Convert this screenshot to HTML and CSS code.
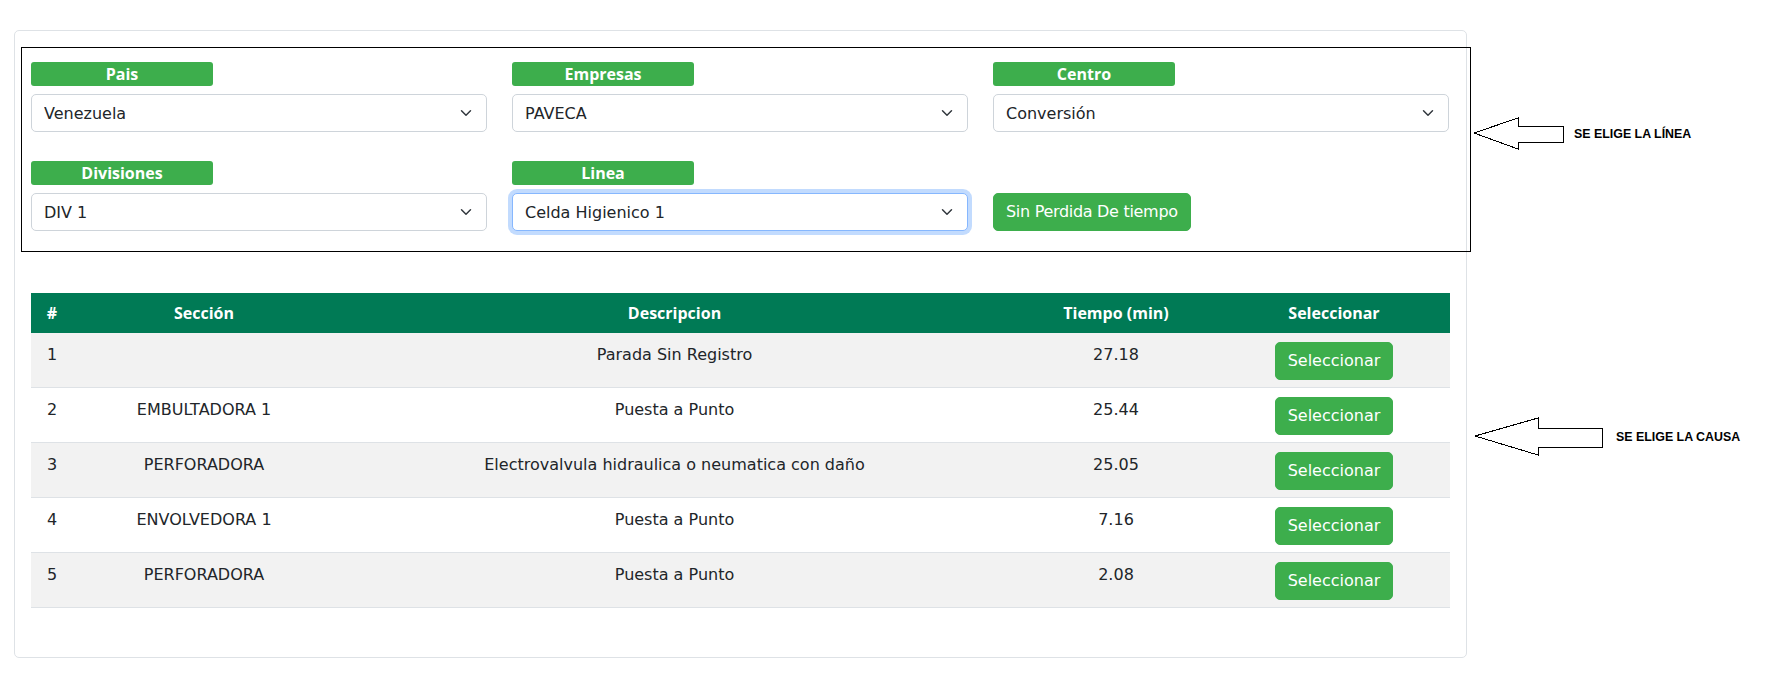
FILE: index.html
```html
<!DOCTYPE html>
<html lang="es">
<head>
<meta charset="utf-8">
<title>Pérdidas de tiempo</title>
<link rel="stylesheet" href="styles.css">
</head>
<body>
<div class="page">
  <div class="card">
    <div class="filters">
      <div class="field">
        <div class="tag">Pais</div>
        <select class="sel"><option>Venezuela</option></select>
      </div>
      <div class="field">
        <div class="tag">Empresas</div>
        <select class="sel"><option>PAVECA</option></select>
      </div>
      <div class="field">
        <div class="tag">Centro</div>
        <select class="sel"><option>Conversión</option></select>
      </div>
      <div class="field">
        <div class="tag">Divisiones</div>
        <select class="sel"><option>DIV 1</option></select>
      </div>
      <div class="field">
        <div class="tag">Linea</div>
        <select class="sel sel-focus"><option>Celda Higienico 1</option></select>
      </div>
      <div class="field field-end">
        <button class="btn btn-wide">Sin Perdida De tiempo</button>
      </div>
    </div>

    <table class="grid">
      <colgroup>
        <col class="c-num"><col class="c-sec"><col class="c-desc"><col class="c-time"><col class="c-sel">
      </colgroup>
      <thead>
        <tr><th>#</th><th>Sección</th><th>Descripcion</th><th>Tiempo (min)</th><th>Seleccionar</th></tr>
      </thead>
      <tbody>
        <tr><td>1</td><td></td><td>Parada Sin Registro</td><td>27.18</td><td><button class="btn">Seleccionar</button></td></tr>
        <tr><td>2</td><td>EMBULTADORA 1</td><td>Puesta a Punto</td><td>25.44</td><td><button class="btn">Seleccionar</button></td></tr>
        <tr><td>3</td><td>PERFORADORA</td><td>Electrovalvula hidraulica o neumatica con daño</td><td>25.05</td><td><button class="btn">Seleccionar</button></td></tr>
        <tr><td>4</td><td>ENVOLVEDORA 1</td><td>Puesta a Punto</td><td>7.16</td><td><button class="btn">Seleccionar</button></td></tr>
        <tr><td>5</td><td>PERFORADORA</td><td>Puesta a Punto</td><td>2.08</td><td><button class="btn">Seleccionar</button></td></tr>
      </tbody>
    </table>
  </div>

  <div class="note note-line">
    <svg class="arrow" width="92" height="34" viewBox="0 0 92 34" shape-rendering="crispEdges">
      <polygon points="1,16 45,1 45,9 90,9 90,25 45,25 45,32" fill="#fff" stroke="#000" stroke-width="1"/>
    </svg>
    <span class="note-text">SE ELIGE LA LÍNEA</span>
  </div>

  <div class="note note-cause">
    <svg class="arrow" width="130" height="40" viewBox="0 0 130 40" shape-rendering="crispEdges">
      <polygon points="1,19 64,1 64,11 128,11 128,30 64,30 64,38" fill="#fff" stroke="#000" stroke-width="1"/>
    </svg>
    <span class="note-text">SE ELIGE LA CAUSA</span>
  </div>
</div>
</body>
</html>
```

FILE: styles.css
```css
* { box-sizing: border-box; }

html, body {
  margin: 0;
  background: #fff;
}

body {
  font-family: "DejaVu Sans", "Liberation Sans", sans-serif;
  font-size: 16px;
  color: #212529;
}

.page {
  position: relative;
  width: 1766px;
  height: 677px;
  padding: 30px 0 0 14px;
}

.card {
  width: 1453px;
  height: 628px;
  border: 1px solid #dee2e6;
  border-radius: 5px;
  padding: 16px;
}

.filters {
  margin: 0 -21px 0 -10px;
  border: 1px solid #000;
  padding: 14px 0 20px 9px;
  display: grid;
  grid-template-columns: repeat(3, 456px);
  column-gap: 25px;
  row-gap: 29px;
}

.field {
  display: flex;
  flex-direction: column;
  gap: 8px;
}

.field-end {
  justify-content: flex-end;
  align-items: flex-start;
}

.tag {
  width: 182px;
  height: 24px;
  line-height: 24px;
  background: #3dae4c;
  color: #fff;
  border-radius: 3px;
  text-align: center;
  font-family: "Open Sans", "DejaVu Sans", sans-serif;
  font-weight: 700;
  font-size: 16px;
}

.sel {
  -webkit-appearance: none;
  appearance: none;
  width: 100%;
  height: 38px;
  margin: 0;
  padding: 7px 36px 5px 12px;
  border: 1px solid #ced4da;
  border-radius: 5px;
  background-color: #fff;
  background-image: url("data:image/svg+xml,%3csvg xmlns='http://www.w3.org/2000/svg' viewBox='0 0 16 16'%3e%3cpath fill='none' stroke='%23343a40' stroke-linecap='round' stroke-linejoin='round' stroke-width='2' d='m2 5 6 6 6-6'/%3e%3c/svg%3e");
  background-repeat: no-repeat;
  background-position: right 12px center;
  background-size: 16px 12px;
  font-family: "DejaVu Sans", sans-serif;
  font-size: 16px;
  line-height: 24px;
  color: #212529;
}

.sel-focus {
  border-color: #86b7fe;
  box-shadow: 0 0 0 4px rgba(13, 110, 253, 0.25);
  outline: none;
}

.btn {
  height: 38px;
  padding: 6px 12px;
  border: 1px solid #3dae4c;
  border-radius: 5px;
  background: #3dae4c;
  color: #fff;
  font-family: "DejaVu Sans", sans-serif;
  font-size: 16px;
  line-height: 24px;
  cursor: pointer;
}

.btn-wide {
  letter-spacing: -0.3px;
}

.grid {
  margin-top: 41px;
  width: 1419px;
  border-collapse: separate;
  border-spacing: 0;
  table-layout: fixed;
}

.c-num { width: 42px; }
.c-sec { width: 262px; }
.c-desc { width: 679px; }
.c-time { width: 204px; }
.c-sel { width: 232px; }

.grid th {
  background: #007a55;
  color: #fff;
  font-family: "Open Sans", "DejaVu Sans", sans-serif;
  font-weight: 700;
  font-size: 16px;
  line-height: 24px;
  padding: 8px;
  text-align: center;
}

.grid td {
  padding: 10px 8px 7px;
  line-height: 24px;
  vertical-align: top;
  text-align: center;
  border-bottom: 1px solid #dee2e6;
  color: #212529;
}

.grid tbody tr:nth-child(odd) td {
  background: #f2f2f2;
}

.grid td .btn {
  vertical-align: top;
  margin-top: -1px;
}

.note {
  position: absolute;
  display: flex;
  align-items: center;
}

.note-line {
  left: 1473px;
  top: 117px;
  gap: 9px;
}

.note-cause {
  left: 1474px;
  top: 417px;
  gap: 12px;
}

.arrow {
  display: block;
}

.note-text {
  font-family: "Liberation Sans", Arial, sans-serif;
  font-weight: 700;
  font-size: 12.4px;
  color: #000;
}
```
